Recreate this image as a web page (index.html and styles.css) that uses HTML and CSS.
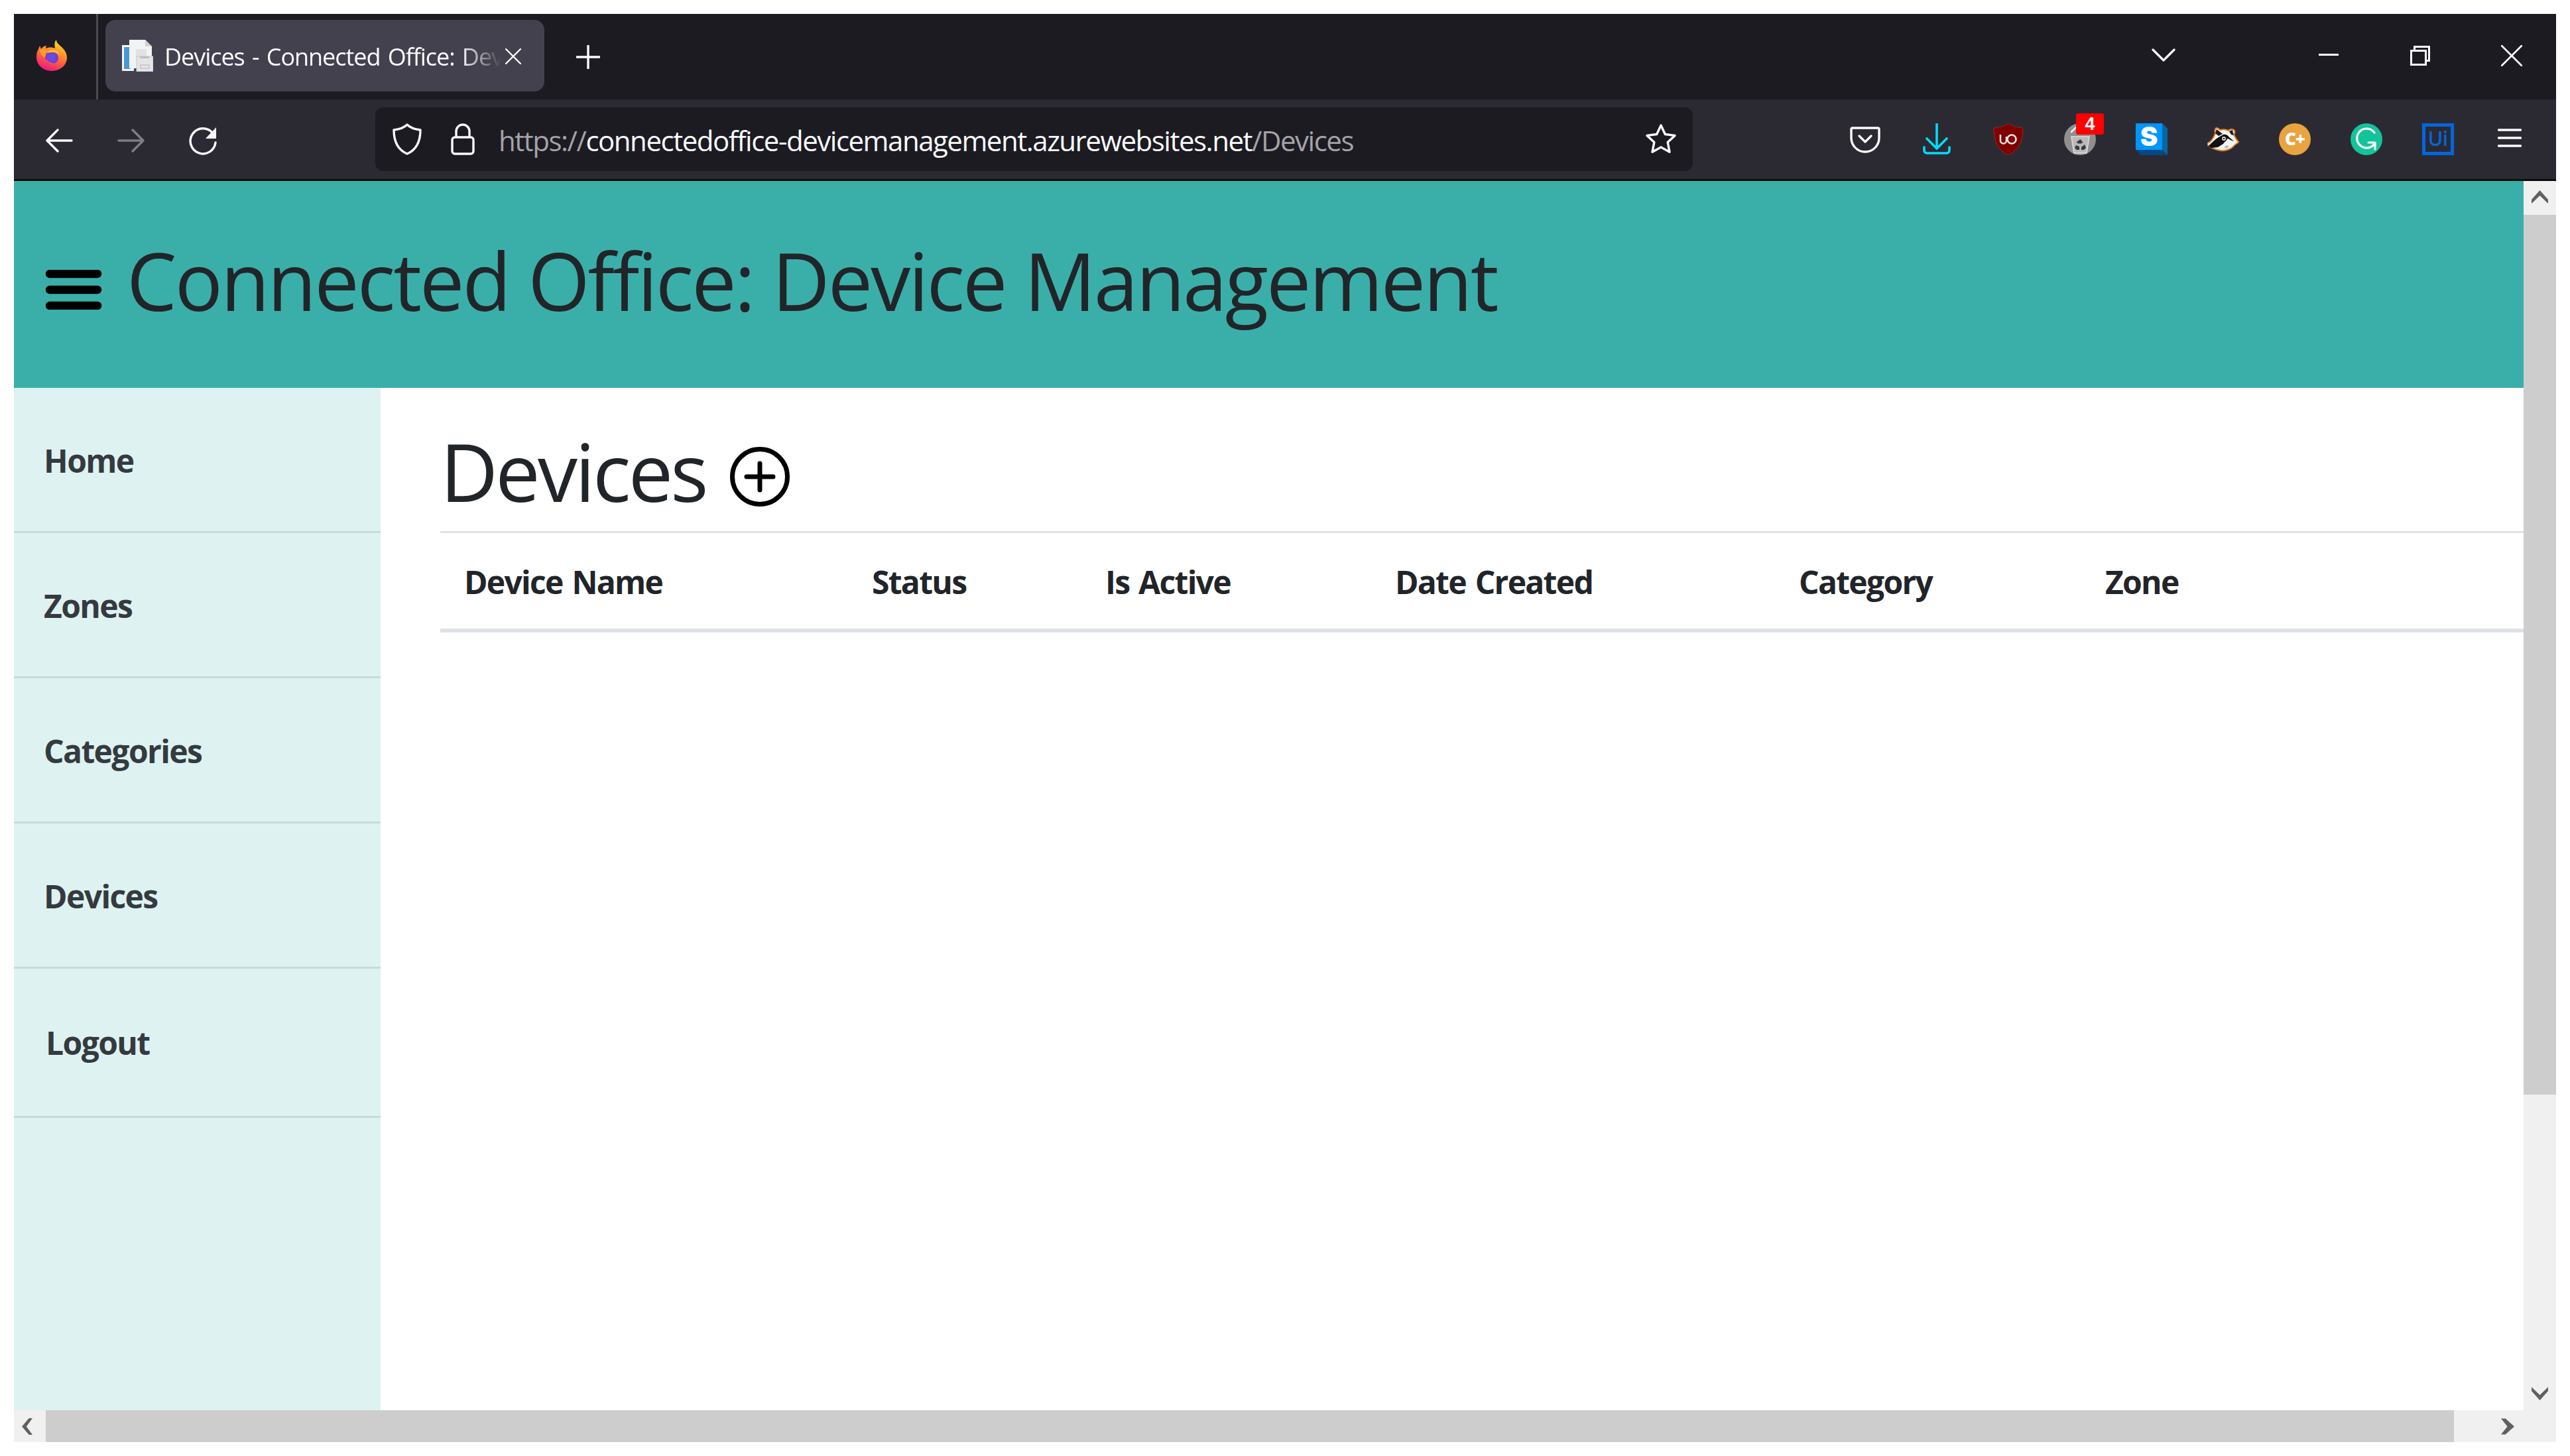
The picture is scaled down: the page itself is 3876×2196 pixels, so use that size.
FILE: index.html
```html
<!DOCTYPE html>
<html lang="en">
<head>
<meta charset="utf-8">
<title>Devices - Connected Office: Device Management</title>
<link rel="stylesheet" href="styles.css">
</head>
<body>
<div class="window">
  <div class="tabbar">
    <div class="ff-cell">
      <svg class="ff" viewBox="0 0 46 47"><defs><linearGradient id="ffa" x1="0.75" y1="0" x2="0.35" y2="1"><stop offset="0" stop-color="#ffe226"/><stop offset="0.5" stop-color="#ff7a2e"/><stop offset="1" stop-color="#f0147f"/></linearGradient><radialGradient id="ffb" cx="0.5" cy="0.45" r="0.6"><stop offset="0" stop-color="#5b54e6"/><stop offset="1" stop-color="#8a30c8"/></radialGradient></defs><path fill="url(#ffa)" d="M30 0c0 5 4 7 9 12 5 5 7 10 7 15 0 11-10 20-23 20S0 38 0 26c0-5 1-9 3-12l2-5 2 5c2-3 5-5 8-5-1 2-1 3-1 4 4-2 10-2 14 0-1-6-1-10 2-13z"/><path fill="#ff9a2e" d="M5 15c4-2 7-1 11 2l-3 4 3 6c-6 0-10-4-11-12z"/><circle cx="23" cy="27" r="10" fill="url(#ffb)"/><path fill="#ffc02c" d="M15 19c4-3 9-4 14-3 3 1 5 4 5 7-3-3-8-5-12-4-2 0-4 1-7 0z"/><path fill="#ff5a3c" d="M13 28c2 7 9 11 16 8-6 0-12-3-16-8z"/></svg>
    </div>
    <div class="sep"></div>
    <div class="tab">
      <svg class="tabicon" viewBox="0 0 48 48"><rect x="1" y="8" width="18" height="39" fill="#f4f6f8"/><rect x="4" y="11" width="10" height="33" fill="#4a98d2"/><path fill="#f2f3f5" d="M12 0h24l10 10v33H12z"/><path fill="#cfd2d6" d="M36 0l10 10H36z"/><rect x="22" y="14" width="16" height="16" fill="#e0e2e5"/><rect x="23" y="25" width="25" height="23" fill="#e4e5e7" stroke="#c8c9cb"/><rect x="28" y="25" width="14" height="3" fill="#bdbec0"/><rect x="29" y="38" width="13" height="5" fill="none" stroke="#b2b3b5"/></svg>
      <span class="tabtitle">Devices - Connected Office: Device Management</span>
      <svg class="tabclose" viewBox="0 0 24 24"><path d="M1 1l22 22M23 1L1 23" stroke="#fbfbfe" stroke-width="2.4" stroke-linecap="round"/></svg>
    </div>
    <svg class="newtab" viewBox="0 0 36 36"><path d="M18 1v34M1 18h34" stroke="#fbfbfe" stroke-width="3.4" stroke-linecap="round"/></svg>
    <div class="grow"></div>
    <svg class="tablist" viewBox="0 0 36 20"><path d="M2 2l16 16L34 2" fill="none" stroke="#fbfbfe" stroke-width="3.2" stroke-linecap="round" stroke-linejoin="round"/></svg>
    <svg class="win-min" viewBox="0 0 30 3"><rect width="30" height="3" fill="#fff"/></svg>
    <svg class="win-max" viewBox="0 0 30 30"><path d="M1.5 7.5h22v21h-22zM6.500 7V1.500h22v21H24" fill="none" stroke="#fff" stroke-width="3"/></svg>
    <svg class="win-close" viewBox="0 0 32 32"><path d="M1 1l30 30M31 1L1 31" stroke="#fff" stroke-width="2.600" stroke-linecap="round"/></svg>
  </div>

  <div class="navbar">
    <svg class="nav-back" viewBox="0 0 42 36"><path d="M19 2L3 18l16 16M3 18h37" fill="none" stroke="#fbfbfe" stroke-width="3.400" stroke-linecap="round" stroke-linejoin="round"/></svg>
    <svg class="nav-fwd" viewBox="0 0 42 36"><path d="M23 2l16 16-16 16M39 18H2" fill="none" stroke="#7f7e85" stroke-width="3.400" stroke-linecap="round" stroke-linejoin="round"/></svg>
    <svg class="nav-reload" viewBox="0 0 44 44"><path d="M37 10A19 19 0 1 0 41 24" fill="none" stroke="#fbfbfe" stroke-width="3.400" stroke-linecap="round"/><path fill="#fbfbfe" d="M42 1v17H26z"/></svg>
    <div class="urlbar">
      <svg class="ub-shield" viewBox="0 0 44 48"><path d="M22 2c5 5 12 7 20 8 0 18-6 30-20 36C8 40 2 28 2 10c8-1 15-3 20-8z" fill="none" stroke="#fbfbfe" stroke-width="3.400" stroke-linejoin="round"/></svg>
      <svg class="ub-lock" viewBox="0 0 36 48"><path d="M8 21V12a10 10 0 0 1 20 0v9" fill="none" stroke="#fbfbfe" stroke-width="3.400"/><rect x="2" y="21" width="32" height="25" rx="4" fill="none" stroke="#fbfbfe" stroke-width="3.400"/></svg>
      <div class="url"><span class="url-dim">https://</span>connectedoffice-devicemanagement.azurewebsites.net<span class="url-dim">/Devices</span></div>
      <svg class="ub-star" viewBox="0 0 48 48"><path d="M24 3l6.300 13.500 14.700 1.900-10.800 10.200 2.800 14.600L24 36l-13 7.200 2.800-14.600L3 18.400l14.700-1.900z" fill="none" stroke="#fbfbfe" stroke-width="3.400" stroke-linejoin="round"/></svg>
    </div>
    <div class="grow"></div>
    <div class="tools">
      <div class="tool">
        <svg class="ico" viewBox="0 0 48 48"><path d="M5 7h38a2 2 0 0 1 2 2v13a21 21 0 0 1-42 0V9a2 2 0 0 1 2-2z" fill="none" stroke="#fbfbfe" stroke-width="3.400"/><path d="M15 19l9 9 9-9" fill="none" stroke="#fbfbfe" stroke-width="3.400" stroke-linecap="round" stroke-linejoin="round"/></svg>
      </div>
      <div class="tool">
        <svg class="ico" viewBox="0 0 48 48"><path d="M24 1v36M9 23l15 15 15-15M5 36v5a4 4 0 0 0 4 4h30a4 4 0 0 0 4-4v-5" fill="none" stroke="#00ddff" stroke-width="3.600" stroke-linecap="round" stroke-linejoin="round"/></svg>
      </div>
      <div class="tool">
        <svg class="ico" viewBox="0 0 44 48"><path d="M22 0c5 4 13 6 22 7 0 20-6 33-22 41C6 40 0 27 0 7c9-1 17-3 22-7z" fill="#800000" stroke="#8d2a2a"/><path d="M10 17v9a4.500 4.500 0 0 0 9 0v-6" fill="none" stroke="#eee2e2" stroke-width="2.600"/><circle cx="27" cy="24" r="6.500" fill="none" stroke="#eee2e2" stroke-width="2.600"/></svg>
      </div>
      <div class="tool">
        <svg class="ico" viewBox="0 0 48 48"><circle cx="24" cy="24" r="24" fill="#8f8f8f"/><path d="M11 13l12-12" stroke="#eee" stroke-width="2.500" stroke-linecap="round"/><path d="M11 20h27l-4 25H15z" fill="#b9b9b9" stroke="#e0e0e0" stroke-width="1.500"/><path d="M24.500 24l4 5-3 1.500h-4l-3-2zM18 33l-2 4 3 3h4v-5zM31 32l2 5-3 3h-4l0-4z" fill="#3a3a3a"/></svg>
        <span class="badge">4</span>
      </div>
      <div class="tool">
        <svg class="ico" viewBox="0 0 48 48"><path fill="#0095ff" d="M0 0h40v40H0z"/><path fill="#06669f" d="M40 0l8 8v40l-8-8z"/><path fill="#07487f" d="M0 40h40l8 8H8z"/></svg>
        <span class="glyph-s">S</span>
      </div>
      <div class="tool">
        <svg class="ico ico-badger" viewBox="0 0 48 38"><path d="M14 2c3 0 4 2 5 3 4-1 9-1 13 1 2-2 6-3 8-1 3 2 1 5 0 7 2 4 4 8 7 11-2 3-5 3-7 6-4 5-13 8-20 7-8-1-13-3-19-8-2-2 0-4 3-5 3-3 6-7 8-13-1-4 0-8 2-8z" fill="#f4f4f4" stroke="#e67f22" stroke-width="2"/><path d="M2 29c5-5 10-10 15-13l7-4c4-1 7 1 9 4l7 6c-5-1-7-4-10-4l-6 8-8 5-9 1c-2 0-4-1-5-3z" fill="#111"/><path d="M14 4l9 7-6 3-5-4zM33 7l5-2 1 5 1 3-4-1z" fill="#1a1a1a"/><circle cx="25" cy="18" r="3.800" fill="#eee" stroke="#111" stroke-width="1.800"/><circle cx="25" cy="18" r="1.300" fill="#111"/><path d="M25 31l5-3 3 2-4 3z" fill="#bbb"/></svg>
      </div>
      <div class="tool">
        <span class="circle circle-c">C+</span>
      </div>
      <div class="tool">
        <svg class="ico" viewBox="0 0 48 48"><circle cx="24" cy="24" r="24" fill="#15c39a"/><path d="M36 31A14.500 14.500 0 1 1 36 14" fill="none" stroke="#fff" stroke-width="3.200" stroke-linecap="round"/><path d="M27 29h10v10" fill="none" stroke="#fff" stroke-width="3.200" stroke-linecap="round" stroke-linejoin="round"/></svg>
      </div>
      <div class="tool">
        <span class="ui-mark">Ui</span>
      </div>
      <div class="tool">
        <svg class="ico-menu" viewBox="0 0 36 28"><path d="M1.500 2h33M1.500 14h33M1.500 26h33" stroke="#fbfbfe" stroke-width="3.400" stroke-linecap="round"/></svg>
      </div>
    </div>
  </div>

  <div class="viewport">
    <div class="vrow">
      <div class="page">
        <header class="hero">
          <svg class="hero-burger" viewBox="0 0 84 60"><path d="M6 6h72M6 30h72M6 54h72" stroke="#000" stroke-width="12.500" stroke-linecap="round"/></svg>
          <h1 class="hero-title">Connected Office: Device Management</h1>
        </header>
        <div class="body">
          <nav class="side">
            <a class="side-link">Home</a>
            <a class="side-link">Zones</a>
            <a class="side-link">Categories</a>
            <a class="side-link">Devices</a>
            <a class="side-link side-last">Logout</a>
          </nav>
          <main class="main">
            <div class="heading">
              <h1 class="page-title">Devices</h1>
              <svg class="add" viewBox="0 0 90 90"><circle cx="45" cy="45" r="41.500" fill="none" stroke="#000" stroke-width="7"/><path d="M45 25v40M25 45h40" stroke="#000" stroke-width="7" stroke-linecap="round"/></svg>
            </div>
            <table class="grid">
              <thead>
                <tr>
                  <th class="c1">Device Name</th>
                  <th class="c2">Status</th>
                  <th class="c3">Is Active</th>
                  <th class="c4">Date Created</th>
                  <th class="c5">Category</th>
                  <th class="c6">Zone</th>
                </tr>
              </thead>
            </table>
          </main>
        </div>
      </div>
      <div class="vbar">
        <div class="sb-btn sb-up"><svg class="arr" viewBox="0 0 25 20"><path d="M0 14L12.500 0 25 14v6L12.500 8 0 20z" fill="#606060"/></svg></div>
        <div class="vthumb"></div>
        <div class="grow"></div>
        <div class="sb-down"><svg class="arr" viewBox="0 0 25 20"><path d="M0 0l12.500 12L25 0v6L12.500 20 0 6z" fill="#606060"/></svg></div>
      </div>
    </div>
    <div class="hbar">
      <div class="sb-left"><svg class="arr-h" viewBox="0 0 21 33"><path d="M21 0H14L0 16.500 14 33h7L9 16.500z" fill="#606060"/></svg></div>
      <div class="hthumb"></div>
      <div class="sb-right"><svg class="arr-h" viewBox="0 0 21 25"><path d="M0 0h7l14 12.500L7 25H0l10-12.500z" fill="#606060"/></svg></div>
    </div>
  </div>
</div>
</body>
</html>
```

FILE: styles.css
```css
* { box-sizing: border-box; }
html, body { margin: 0; padding: 0; background: #fff; }
body { padding: 21px; width: 3876px; height: 2196px; overflow: hidden; font-family: "Open Sans", "Noto Sans", sans-serif; color: #212529; }
.window { width: 3834px; height: 2154px; display: flex; flex-direction: column; }
.grow { flex: 1; }

.tabbar { height: 129px; background: #1c1b22; display: flex; align-items: flex-start; flex: none; }
.ff-cell { width: 124px; height: 129px; padding: 39px 0 0 34px; flex: none; }
.ff { width: 46px; height: 47px; display: block; }
.sep { width: 3px; height: 129px; background: #4a4a50; flex: none; }
.tab { width: 662px; height: 108px; margin: 9px 0 0 11px; background: #42414d; border-radius: 15px; display: flex; align-items: flex-start; padding: 30px 0 0 24px; flex: none; }
.tabicon { width: 48px; height: 48px; flex: none; }
.tabtitle { width: 508px; margin: 2px 0 0 17px; font-size: 36px; line-height: 48px; letter-spacing: -1.05px; word-spacing: 3px; color: #fbfbfe; white-space: nowrap; overflow: hidden; -webkit-mask-image: linear-gradient(to right, #000 88%, transparent 100%); mask-image: linear-gradient(to right, #000 88%, transparent 100%); }
.tabclose { width: 24px; height: 24px; margin: 13px 0 0 6px; flex: none; }
.newtab { width: 36px; height: 36px; margin: 47px 0 0 48px; flex: none; }
.tablist { width: 36px; height: 20px; margin: 52px 216px 0 0; flex: none; }
.win-min { width: 30px; height: 3px; margin: 60px 108px 0 0; flex: none; }
.win-max { width: 30px; height: 30px; margin: 48px 107px 0 0; flex: none; }
.win-close { width: 32px; height: 32px; margin: 47px 51px 0 0; flex: none; }

.navbar { height: 123px; border-bottom: 3px solid #0c0c0d; background: #2b2a33; display: flex; align-items: flex-start; flex: none; }
.nav-back { width: 42px; height: 36px; margin: 44px 0 0 47px; flex: none; }
.nav-fwd { width: 42px; height: 36px; margin: 44px 0 0 67px; flex: none; }
.nav-reload { width: 44px; height: 44px; margin: 41px 0 0 65px; flex: none; }
.urlbar { width: 1987px; height: 96px; margin: 12px 0 0 238px; background: #1c1b22; border-radius: 12px; display: flex; align-items: center; padding: 0 0 0 26px; flex: none; }
.ub-shield { width: 44px; height: 48px; flex: none; }
.ub-lock { width: 36px; height: 48px; margin-left: 44px; flex: none; }
.url { width: 1729px; margin: 4px 0 0 36px; font-size: 42px; line-height: 56px; letter-spacing: -1.48px; color: #fbfbfe; white-space: nowrap; }
.url-dim { color: #a4a3a8; }
.ub-star { width: 48px; height: 48px; flex: none; }
.tools { display: flex; gap: 60px; padding: 36px 46px 0 0; flex: none; }
.tool { width: 48px; height: 48px; position: relative; display: flex; align-items: center; justify-content: center; }
.ico { width: 48px; height: 48px; display: block; }
.ico-badger { height: 38px; }
.ico-menu { width: 36px; height: 28px; display: block; margin-top: -4px; }
.badge { position: absolute; left: 18px; top: -15px; width: 42px; height: 32px; background: #ff0000; border-radius: 3px; color: #fff; font: 700 27px/32px "Liberation Sans", sans-serif; text-align: center; }
.glyph-s { position: absolute; left: 0; top: 0; width: 40px; height: 40px; color: #fff; font: 900 40px/40px "Inter", "Liberation Sans", sans-serif; text-align: center; }
.circle { width: 48px; height: 48px; border-radius: 50%; display: block; text-align: center; color: #fff; }
.circle-c { background: #e9a33f; font: 800 26px/47px "Open Sans", sans-serif; letter-spacing: -1px; }
.ui-mark { width: 48px; height: 48px; display: block; border: 5px solid #0067df; background: #2b2a33; color: #0067df; font: 500 30px/37px "Inter", "Liberation Sans", sans-serif; text-align: center; }

.viewport { flex: 1; min-height: 0; display: flex; flex-direction: column; }
.vrow { flex: 1; min-height: 0; display: flex; }
.page { flex: 1; min-width: 0; display: flex; flex-direction: column; background: #fff; }
.hero { height: 312px; background: #3aafa9; display: flex; align-items: flex-start; flex: none; }
.hero-burger { width: 84px; height: 60px; margin: 134px 0 0 48px; flex: none; }
.hero-title { margin: 70px 0 0 38px; font-size: 120px; line-height: 160px; font-weight: 400; letter-spacing: -2.94px; color: #212529; white-space: nowrap; }
.body { flex: 1; min-height: 0; display: flex; }
.side { width: 553px; background: #def2f1; flex: none; display: flex; flex-direction: column; }
.side-link { height: 219px; border-bottom: 3px solid #c8dad9; padding: 78px 0 0 45px; font-size: 48px; line-height: 64px; font-weight: 700; letter-spacing: -1.600px; color: #343a40; }
.side-last { height: 225px; padding: 80px 0 0 48px; }
.main { flex: 1; min-width: 0; padding-left: 90px; }
.heading { height: 219px; border-bottom: 3px solid #dee2e6; display: flex; align-items: flex-start; }
.page-title { margin: 46px 0 0 0; font-size: 120px; line-height: 160px; font-weight: 400; letter-spacing: -3.700px; color: #212529; }
.add { width: 90px; height: 90px; margin: 89px 0 0 36px; flex: none; }
.grid { width: 100%; border-collapse: collapse; table-layout: fixed; }
.grid th { height: 147px; border-bottom: 6px solid #dee2e6; padding: 3px 0 0 36px; text-align: left; font-size: 48px; font-weight: 700; letter-spacing: -1.700px; word-spacing: 3px; color: #212529; white-space: nowrap; }
.c1 { width: 615px; }
.c2 { width: 352px; }
.c3 { width: 437px; }
.c4 { width: 609px; }
.c5 { width: 462px; }

.vbar { width: 49px; background: #f0f0f0; display: flex; flex-direction: column; flex: none; }
.sb-btn { height: 51px; display: flex; align-items: flex-start; justify-content: center; padding-top: 14px; flex: none; }
.sb-down { height: 54px; padding-top: 19px; display: flex; justify-content: center; flex: none; }
.arr { width: 25px; height: 20px; display: block; }
.arr-h { width: 20px; height: 25px; display: block; }
.vthumb { height: 1327px; background: #cdcdcd; flex: none; }
.hbar { height: 48px; background: #f0f0f0; display: flex; flex: none; }
.sb-left { width: 48px; display: flex; align-items: center; padding-left: 10px; flex: none; }
.hthumb { width: 3632px; background: #cdcdcd; flex: none; }
.sb-right { width: 154px; display: flex; align-items: center; padding-left: 71px; flex: none; }
```
